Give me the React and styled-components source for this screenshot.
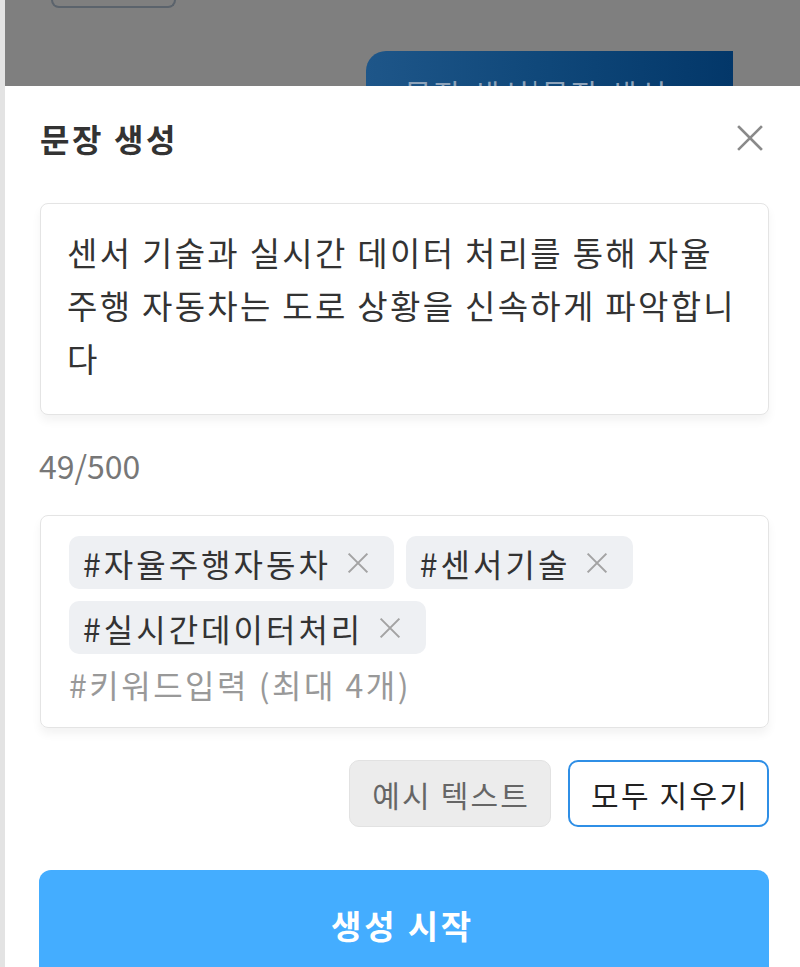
import React from 'react';
import styled, { createGlobalStyle } from 'styled-components';

const GlobalStyle = createGlobalStyle`
  html, body {
    margin: 0;
    padding: 0;
    background: #e3e3e3;
  }
  body {
    font-family: "Noto Sans CJK KR", "Noto Sans", sans-serif;
  }
  * {
    box-sizing: border-box;
  }
`;

const sentenceLines = [
  '센서 기술과 실시간 데이터 처리를 통해 자율',
  '주행 자동차는 도로 상황을 신속하게 파악합니',
  '다',
];

const keywords = ['#자율주행자동차', '#센서기술', '#실시간데이터처리'];

const CloseIcon = ({ size = 28, color = '#8a8a8a', stroke = 2.6 }) => (
  <svg width={size} height={size} viewBox="0 0 28 28" fill="none">
    <path d="M3 3 L25 25 M25 3 L3 25" stroke={color} strokeWidth={stroke} strokeLinecap="square" />
  </svg>
);

const App = () => {
  return (
    <>
      <GlobalStyle />
      <Page>
        <Backdrop>
          <GhostOutline />
          <GhostPrimary>문장 생성|문장 생성</GhostPrimary>
        </Backdrop>

        <Sheet>
          <Header>
            <Title>문장 생성</Title>
            <CloseButton aria-label="닫기">
              <CloseIcon />
            </CloseButton>
          </Header>

          <SentenceBox>
            {sentenceLines.map((line, i) => (
              <SentenceLine key={i}>{line}</SentenceLine>
            ))}
          </SentenceBox>

          <Counter>49/500</Counter>

          <KeywordBox>
            {keywords.map((k) => (
              <Tag key={k}>
                <span>{k}</span>
                <TagRemove aria-label="삭제">
                  <CloseIcon size={22} color="#a3a3a3" stroke={2.6} />
                </TagRemove>
              </Tag>
            ))}
            <Placeholder>#키워드입력 (최대 4개)</Placeholder>
          </KeywordBox>

          <ActionRow>
            <ActionButton $variant="gray">예시 텍스트</ActionButton>
            <ActionButton $variant="outline">모두 지우기</ActionButton>
          </ActionRow>

          <GenerateButton>생성 시작</GenerateButton>
        </Sheet>
      </Page>
    </>
  );
};

const Page = styled.div`
  margin-left: 5px;
  height: 967px;
  overflow: hidden;
  display: flex;
  flex-direction: column;
`;

const Backdrop = styled.div`
  flex: 0 0 86px;
  background: #7f7f7f;
  overflow: hidden;
  display: flex;
  flex-direction: column;
`;

const GhostOutline = styled.div`
  flex-shrink: 0;
  margin-left: 46px;
  width: 125px;
  height: 8px;
  border: 2px solid #5b636c;
  border-top: none;
  border-radius: 0 0 10px 10px;
`;

const GhostPrimary = styled.div`
  flex-shrink: 0;
  margin-left: 361px;
  margin-top: 43px;
  width: 367px;
  height: 60px;
  border-radius: 20px 0 0 0;
  background: linear-gradient(90deg, #1e5689 0%, #0f4779 50%, #033769 100%);
  color: #8ea3ba;
  font-size: 30px;
  line-height: 30px;
  letter-spacing: 2px;
  padding: 27px 0 0 38px;
  white-space: nowrap;
`;

const Sheet = styled.div`
  flex: 1;
  background: #ffffff;
  padding: 0 31px 0 34px;
  display: flex;
  flex-direction: column;
`;

const Header = styled.div`
  display: flex;
  align-items: center;
  justify-content: space-between;
  height: 40px;
  margin-top: 32px;
  margin-bottom: 45px;
  padding-left: 1px;
  padding-right: 5px;
`;

const Title = styled.h2`
  margin: 0;
  font-size: 32px;
  line-height: 40px;
  font-weight: 700;
  letter-spacing: 2.6px;
  color: #333333;
`;

const CloseButton = styled.button`
  border: none;
  background: none;
  padding: 0;
  display: flex;
  cursor: pointer;
`;

const SentenceBox = styled.div`
  height: 212px;
  margin-left: 1px;
  padding: 22px 10px 0 26px;
  border: 1px solid #e4e4e4;
  border-radius: 8px;
  box-shadow: 0 6px 10px rgba(0, 0, 0, 0.05);
  background: #ffffff;
`;

const SentenceLine = styled.div`
  font-size: 33px;
  line-height: 53px;
  color: #333333;
  white-space: nowrap;
  letter-spacing: 2.3px;
`;

const Counter = styled.div`
  margin-top: 34px;
  font-size: 32px;
  line-height: 32px;
  color: #777777;
`;

const KeywordBox = styled.div`
  margin-top: 34px;
  margin-left: 1px;
  height: 213px;
  padding: 20px 28px 0 28px;
  border: 1px solid #e4e4e4;
  border-radius: 8px;
  box-shadow: 0 6px 10px rgba(0, 0, 0, 0.05);
  display: flex;
  flex-wrap: wrap;
  align-content: flex-start;
  gap: 12px;
`;

const Tag = styled.div`
  display: flex;
  align-items: center;
  gap: 16px;
  height: 53px;
  padding: 0 25px 0 14px;
  border-radius: 10px;
  background: #eef0f3;
  font-size: 32px;
  line-height: 40px;
  letter-spacing: 3px;
  color: #333333;
`;

const TagRemove = styled.button`
  border: none;
  background: none;
  padding: 0;
  display: flex;
  cursor: pointer;
`;

const Placeholder = styled.div`
  flex: 0 0 100%;
  font-size: 32px;
  line-height: 36px;
  letter-spacing: 2.5px;
  color: #999999;
`;

const ActionRow = styled.div`
  display: flex;
  justify-content: flex-end;
  gap: 17px;
  margin-top: 32px;
`;

const ActionButton = styled.button`
  height: 67px;
  padding: ${({ $variant }) => ($variant === 'gray' ? '0 20px 0 22px' : '0 18px 0 21px')};
  border-radius: 10px;
  font-family: inherit;
  font-size: 30px;
  letter-spacing: 2.2px;
  cursor: pointer;
  background: ${({ $variant }) => ($variant === 'gray' ? '#ececec' : '#ffffff')};
  color: ${({ $variant }) => ($variant === 'gray' ? '#666666' : '#222222')};
  border: ${({ $variant }) => ($variant === 'gray' ? '1px solid #e2e2e2' : '2px solid #2f8fe6')};
`;

const GenerateButton = styled.button`
  margin-top: 43px;
  height: 110px;
  flex-shrink: 0;
  border: none;
  border-radius: 12px;
  background: #44adff;
  color: #ffffff;
  font-family: inherit;
  font-size: 33px;
  font-weight: 700;
  letter-spacing: 2.8px;
  padding-left: 3px;
  cursor: pointer;
`;

export default App;
